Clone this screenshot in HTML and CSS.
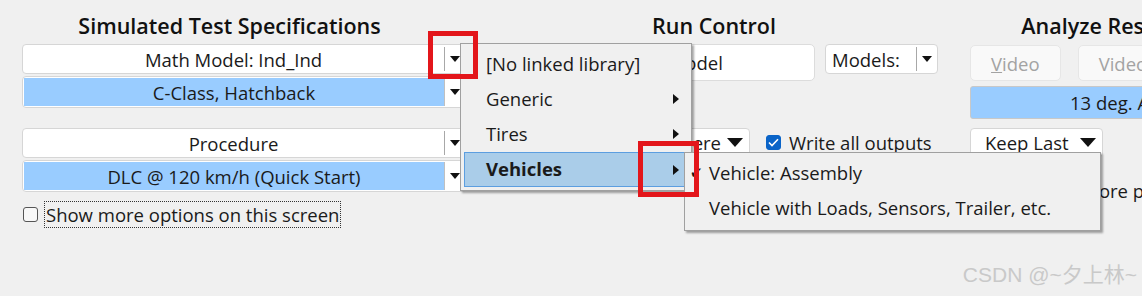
FILE: index.html
```html
<!DOCTYPE html>
<html lang="en">
<head>
  <meta charset="UTF-8" />
  <title>Simulated Test Specifications</title>
  <link rel="stylesheet" href="styles.css">
</head>
<body>

  <div class="screen">

    <!-- left: test specs -->
    <div class="col col-specs">
      <h2 class="col-title">Simulated Test Specifications</h2>

      <div class="combo">
        <span class="combo-text">Math Model: Ind_Ind</span>
        <span class="combo-btn"><i class="tri"></i></span>
      </div>
      <div class="combo combo-sel">
        <span class="combo-text">C-Class, Hatchback</span>
        <span class="combo-btn"><i class="tri"></i></span>
      </div>

      <div class="combo combo-gap">
        <span class="combo-text">Procedure</span>
        <span class="combo-btn"><i class="tri"></i></span>
      </div>
      <div class="combo combo-sel">
        <span class="combo-text">DLC @ 120 km/h (Quick Start)</span>
        <span class="combo-btn"><i class="tri"></i></span>
      </div>

      <label class="check-row">
        <span class="check"></span>
        <span class="check-label focus">Show more options on this screen</span>
      </label>
    </div>

    <!-- middle: run control -->
    <div class="col col-run">
      <h2 class="col-title">Run Control</h2>

      <div class="run-row">
        <button class="run-button">Run Math Model</button>
        <div class="combo combo-small">
          <span class="combo-text left">Models:</span>
          <span class="combo-btn"><i class="tri"></i></span>
        </div>
      </div>

      <div class="run-row run-row-2">
        <div class="combo combo-flat combo-where">
          <span class="combo-text left">Here</span>
          <i class="tri"></i>
        </div>
        <label class="check-row inline">
          <span class="check checked">
            <svg width="11" height="9" viewBox="0 0 11 9"><path d="M1 4.5 L4 7.5 L10 1.2" fill="none" stroke="#fff" stroke-width="1.6"/></svg>
          </span>
          <span class="check-label">Write all outputs</span>
        </label>
      </div>
    </div>

    <!-- right: analyze results -->
    <div class="col col-results">
      <h2 class="col-title">Analyze Results</h2>

      <div class="video-row">
        <button class="video-button" disabled><u>V</u>ideo</button>
        <button class="video-button" disabled>Video + Plot</button>
      </div>

      <div class="result-bar">13 deg. Animator Camera</div>

      <div class="combo combo-flat combo-keep">
        <span class="combo-text left">Keep Last</span>
        <i class="tri"></i>
      </div>

      <label class="check-row more-plots">
        <span class="check"></span>
        <span class="check-label">Show more plots</span>
      </label>
    </div>

  </div>

  <!-- open library menu -->
  <div class="menu menu-main">
    <div class="menu-item">[No linked library]</div>
    <div class="menu-item">Generic <i class="sub-arrow"></i></div>
    <div class="menu-item">Tires <i class="sub-arrow"></i></div>
    <div class="menu-item active">Vehicles <i class="sub-arrow"></i></div>
  </div>

  <div class="menu menu-sub">
    <div class="menu-item"><span class="tick">&#10004;</span>Vehicle: Assembly</div>
    <div class="menu-item">Vehicle with Loads, Sensors, Trailer, etc.</div>
  </div>

  <!-- annotation boxes -->
  <div class="mark mark-1"></div>
  <div class="mark mark-2"></div>

  <div class="watermark">CSDN @~夕上林~</div>

</body>
</html>
```

FILE: styles.css
```css
body {
  margin: 0;
  background-color: #f0f0f0;
  font-family: "Open Sans", "Noto Sans CJK SC", sans-serif;
  font-size: 18.5px;
  color: #1a1a1a;
  overflow: hidden;
  width: 1142px;
  height: 296px;
  position: relative;
}

.screen {
  display: flex;
  padding: 8px 0 0 22px;
  width: 1400px;
}

.col {
  display: flex;
  flex-direction: column;
}

.col-specs {
  width: 444px;
}

.col-specs .col-title {
  padding-right: 29px;
}

.col-run {
  width: 452px;
  margin-left: 22px;
}

.col-results {
  width: 254px;
  margin-left: 30px;
}

.col-results .col-title {
  padding-left: 10px;
}

.col-title {
  margin: 0;
  height: 36px;
  line-height: 36px;
  font-size: 21.5px;
  font-weight: 600;
  text-align: center;
  color: #111;
  white-space: nowrap;
}

/* combo boxes */
.combo {
  display: flex;
  align-items: stretch;
  height: 30px;
  box-sizing: border-box;
  background-color: white;
  border: 1px solid #d6d6d6;
  border-radius: 4px;
}

.combo-sel {
  height: 32px;
  margin-top: 2px;
  padding: 1px 0 1px 1px;
}

.combo-sel .combo-text {
  background-color: #99ccff;
}

.combo-gap {
  margin-top: 20px;
}

.combo-text {
  flex: 1;
  display: flex;
  align-items: center;
  justify-content: center;
  white-space: nowrap;
}

.combo-text.left {
  justify-content: flex-start;
  padding-left: 6px;
}

.combo-btn {
  width: 20px;
  display: flex;
  align-items: center;
  justify-content: center;
  border-left: 1px solid #a8a8a8;
  margin: 2px 0;
}

.combo-sel .combo-btn {
  margin: 0;
  border-left-color: #c0c0c0;
}

.tri {
  display: block;
  width: 0;
  height: 0;
  border-left: 5px solid transparent;
  border-right: 5px solid transparent;
  border-top: 6px solid #111;
}

.combo-flat {
  align-items: center;
  padding-right: 6px;
}

.combo-flat .tri {
  border-left-width: 8px;
  border-right-width: 8px;
  border-top-width: 9px;
}

/* checkboxes */
.check-row {
  display: flex;
  align-items: center;
  gap: 8px;
  margin-top: 8px;
  height: 28px;
  padding-left: 1px;
}

.check {
  width: 13px;
  height: 13px;
  flex: none;
  border: 1px solid #555;
  border-radius: 3px;
  background-color: #f8f8f8;
  display: flex;
  align-items: center;
  justify-content: center;
}

.check.checked {
  background-color: #0a64c8;
  border-color: #0a64c8;
}

.check-label {
  white-space: nowrap;
  padding: 0 1px;
}

.check-label.focus {
  border: 1px dotted #333;
  margin-left: -2px;
}

/* run control */
.run-row {
  display: flex;
  align-items: flex-start;
}

.run-button {
  width: 327px;
  height: 37px;
  background-color: white;
  border: 1px solid #dcdcdc;
  border-radius: 5px;
  font: inherit;
  color: #1a1a1a;
}

.combo-small {
  width: 113px;
  margin-left: 10px;
}

.run-row-2 {
  margin-top: 47px;
  align-items: center;
}

.combo-where {
  width: 78px;
  margin-left: 184px;
  height: 29px;
}

.check-row.inline {
  margin: 0 0 0 15px;
  gap: 7px;
}

/* analyze results */
.video-row {
  display: flex;
  gap: 17px;
  margin-top: 1px;
}

.video-button {
  width: 93px;
  height: 36px;
  background-color: #f9f9f9;
  border: 1px solid #e6e6e6;
  border-radius: 5px;
  font: inherit;
  color: #a3a3a3;
  white-space: nowrap;
}

.video-button + .video-button {
  width: 150px;
  text-align: left;
  padding-left: 20px;
}

.result-bar {
  margin-top: 5px;
  height: 33px;
  box-sizing: border-box;
  background-color: #99ccff;
  border: 1px solid #c8c8c8;
  border-radius: 3px;
  padding-left: 99px;
  line-height: 31px;
  white-space: nowrap;
}

.combo-keep {
  width: 133px;
  margin-top: 9px;
  height: 29px;
}

.combo-keep .combo-text {
  padding-left: 14px;
}

.more-plots {
  margin-top: 19px;
  padding-left: 36px;
}

/* popup menus */
.menu {
  position: absolute;
  background-color: #f0f0f0;
  border: 1px solid #a0a0a0;
  box-shadow: 2px 2px 2px rgba(0, 0, 0, 0.35);
  box-sizing: border-box;
}

.menu-main {
  left: 460px;
  top: 43px;
  width: 232px;
  padding: 3px 2px 3px 3px;
}

.menu-sub {
  left: 684px;
  top: 152px;
  width: 417px;
  padding: 3px 2px 4px 2px;
}

.menu-item {
  position: relative;
  height: 35px;
  line-height: 33px;
  padding-left: 22px;
  white-space: nowrap;
  box-sizing: border-box;
}

.menu-sub .menu-item {
  padding-left: 22px;
}

.menu-item.active {
  background-color: #aacde9;
  border: 1px solid #5c9ee0;
  border-width: 1px 0 1px 1px;
  font-weight: 700;
  line-height: 31px;
  padding-left: 21px;
}

.sub-arrow {
  position: absolute;
  right: 10px;
  top: 12px;
  width: 0;
  height: 0;
  border-top: 5px solid transparent;
  border-bottom: 5px solid transparent;
  border-left: 6px solid #111;
}

.tick {
  position: absolute;
  left: 3px;
  font-size: 15px;
}

/* red annotation boxes */
.mark {
  position: absolute;
  border: 5px solid #e3161b;
  box-sizing: border-box;
}

.mark-1 {
  left: 428px;
  top: 31px;
  width: 50px;
  height: 48px;
}

.mark-2 {
  left: 638px;
  top: 141px;
  width: 61px;
  height: 56px;
}

.watermark {
  position: absolute;
  right: 5px;
  bottom: 8px;
  font-family: "Liberation Sans", "Noto Sans CJK SC", sans-serif;
  font-size: 21px;
  color: #c9c9c9;
}
```
